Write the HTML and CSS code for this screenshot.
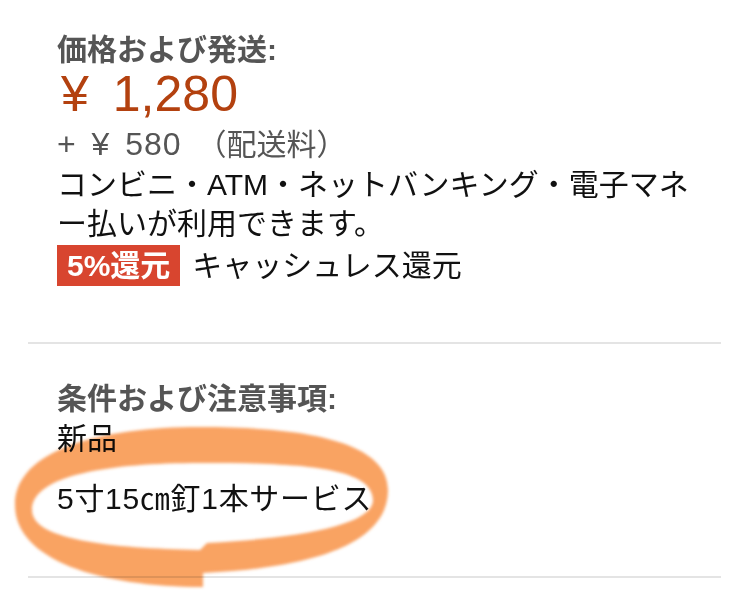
FILE: index.html
```html
<!DOCTYPE html>
<html lang="ja">
<head>
<meta charset="utf-8">
<link rel="stylesheet" href="styles.css">
</head>
<body>
<div class="page">
  <section class="block block-price">
    <h2 class="label">価格および発送:</h2>
    <div class="price"><span class="yen">¥</span>1,280</div>
    <div class="shipping">+ ¥ 580 <span class="paren">（配送料）</span></div>
    <p class="note">コンビニ・ATM・ネットバンキング・電子マネー払いが利用できます。</p>
    <div class="cashless"><span class="badge">5%還元</span><span class="cashless-text">キャッシュレス還元</span></div>
  </section>
  <section class="block block-cond">
    <h2 class="label">条件および注意事項:</h2>
    <div class="cond">新品</div>
    <div class="cond-note">5寸15㎝釘1本サービス</div>
  </section>
  <svg class="marker" width="750" height="607" viewBox="0 0 750 607" aria-hidden="true">
    <defs>
      <filter id="soft" x="-5%" y="-5%" width="110%" height="110%">
        <feGaussianBlur stdDeviation="1.6"/>
      </filter>
    </defs>
    <path filter="url(#soft)" fill="#f78c3c" fill-opacity="0.8" fill-rule="evenodd"
      d="M200 427 C300 427 388 440 388 490 C388 545 310 568 203 573 L203 587 C100 587 15 560 15 505 C15 450 100 427 200 427 Z
         M200 463 C290 463 373 465 373 500 C373 525 300 538 207 543 L200 550 C110 548 32 540 32 510 C32 475 110 463 200 463 Z"/>
  </svg>
</div>
</body>
</html>
```

FILE: styles.css
```css
* { box-sizing: border-box; }
html, body { margin: 0; padding: 0; background: #fff; }
body {
  font-family: "Liberation Sans", "Noto Sans CJK JP", sans-serif;
  color: #111;
  width: 750px;
  height: 607px;
  overflow: hidden;
}
.page {
  position: relative;
  padding: 0 29px 0 28px;
}
.block {
  border-bottom: 2px solid #e4e4e4;
  padding-left: 29px;
}
.block-price { padding-top: 30px; padding-bottom: 56px; }
.block-cond { padding-top: 35px; padding-bottom: 57px; }
.label {
  margin: 0;
  font-size: 30px;
  line-height: 40px;
  font-weight: 700;
  color: #555;
}
.price {
  font-size: 50px;
  line-height: 48px;
  color: #b3410f;
}
.yen {
  margin-left: 4px;
  margin-right: 24px;
}
.shipping {
  margin-top: 6px;
  font-size: 32px;
  line-height: 40px;
  letter-spacing: 1px;
  word-spacing: 5px;
  color: #555;
}
.paren {
  font-size: 30px;
  letter-spacing: 0;
}
.note {
  margin: 0;
  width: 640px;
  font-size: 30px;
  line-height: 39px;
  color: #111;
}
.cashless {
  display: flex;
  align-items: center;
  gap: 12px;
  margin-top: 2px;
  font-size: 30px;
}
.badge {
  display: inline-block;
  background: #d8452f;
  color: #fff;
  font-weight: 700;
  font-size: 30px;
  line-height: 41px;
  padding: 0 10px;
}
.cashless-text { line-height: 41px; }
.cond {
  font-size: 30px;
  line-height: 40px;
  color: #111;
}
.cond-note {
  margin-top: 20px;
  font-size: 30px;
  line-height: 40px;
  letter-spacing: 0.7px;
  color: #111;
}
.marker {
  position: absolute;
  left: 0;
  top: 0;
  mix-blend-mode: multiply;
  pointer-events: none;
}
```
